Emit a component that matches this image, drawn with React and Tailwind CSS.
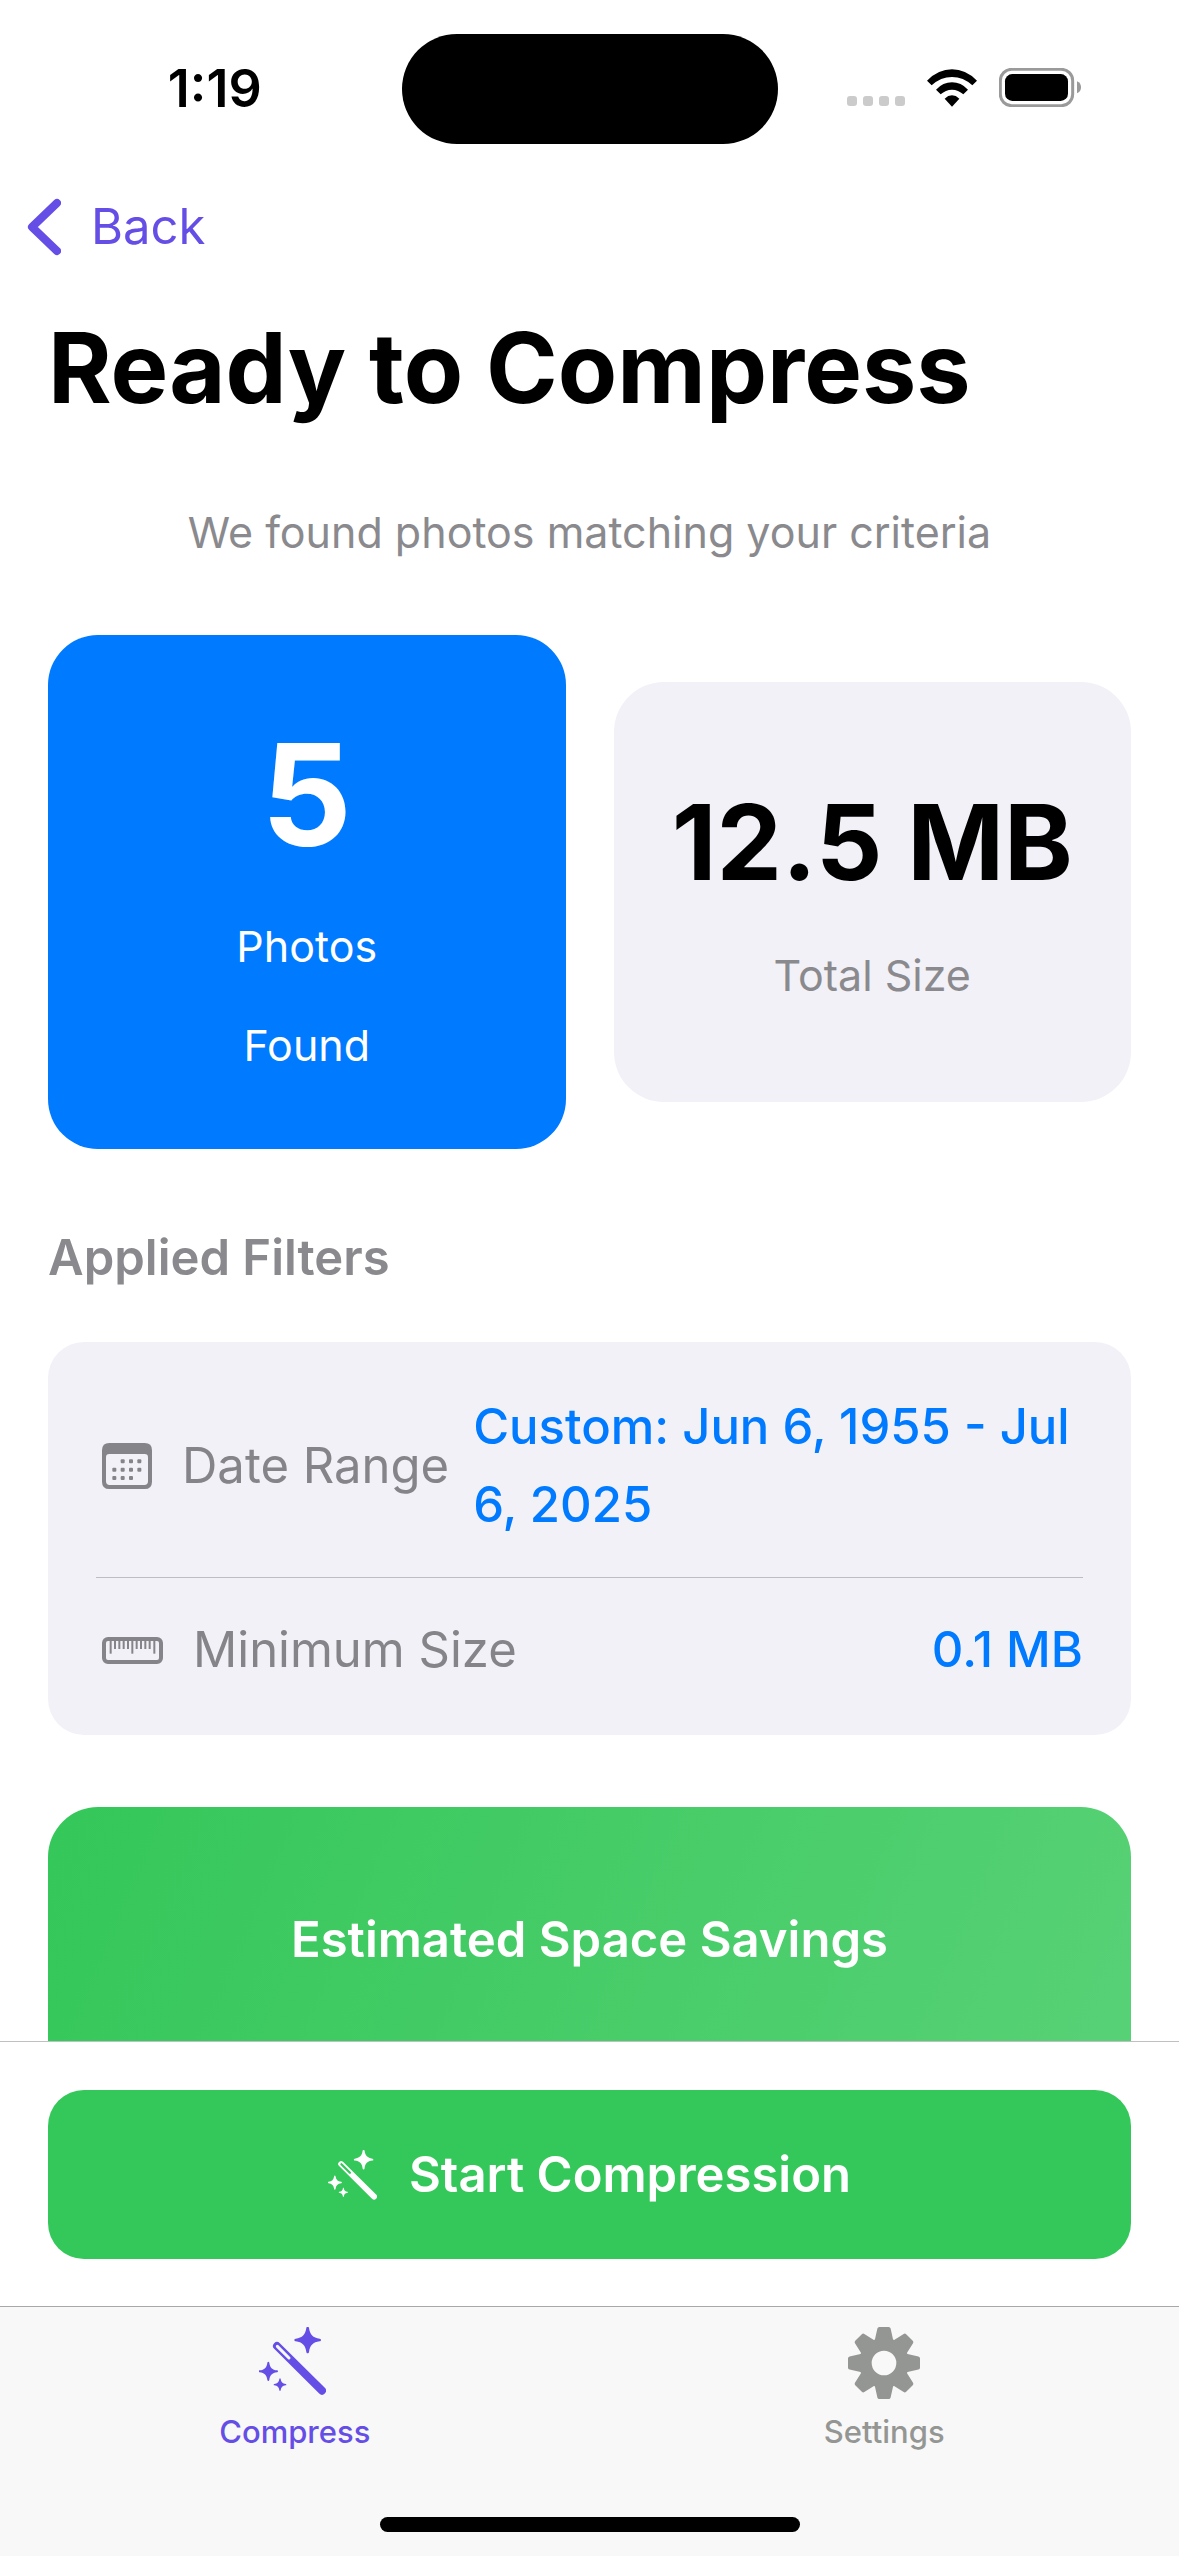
const GEAR_ANGLES = [0, 45, 90, 135, 180, 225, 270, 315];

function Star({ x, y, r }) {
  return (
    <path
      transform={`translate(${x} ${y}) scale(${r})`}
      d="M0-1C.05-1 .09-.97 .1-.9C.17-.4 .4-.17 .9-.1C.97-.09 1-.05 1 0C1 .05 .97 .09 .9 .1C.4 .17 .17 .4 .1 .9C.09 .97 .05 1 0 1C-.05 1-.09 .97-.1 .9C-.17 .4-.4 .17-.9 .1C-.97 .09-1 .05-1 0C-1-.05-.97-.09-.9-.1C-.4-.17-.17-.4-.1-.9C-.09-.97-.05-1 0-1Z"
    />
  );
}

function WandIcon({ className, hollow }) {
  return (
    <svg viewBox="0 0 201 204" className={className} fill="currentColor" aria-hidden="true">
      <Star x={146} y={39} r={40} />
      <Star x={28} y={133} r={29} />
      <Star x={63} y={173} r={19} />
      <path d="M54 57L189 191" stroke="currentColor" strokeWidth="24" strokeLinecap="round" />
      <path d="M55 58L90 93" className={hollow} strokeWidth="9" strokeLinecap="round" />
    </svg>
  );
}

function GearIcon({ className }) {
  return (
    <svg viewBox="-108 -108 216 216" className={className} fill="none" aria-hidden="true">
      <circle r="56" stroke="currentColor" strokeWidth="38" />
      {GEAR_ANGLES.map((angle) => (
        <path
          key={angle}
          transform={`rotate(${angle})`}
          d="M-14-102H14L22-66H-22Z"
          fill="currentColor"
          stroke="currentColor"
          strokeWidth="12"
          strokeLinejoin="round"
        />
      ))}
    </svg>
  );
}

function CalendarIcon({ className }) {
  const dots = [
    [62, 55], [87, 55], [112, 55],
    [37, 80], [62, 80], [87, 80], [112, 80],
    [37, 105], [62, 105], [87, 105],
  ];
  return (
    <svg viewBox="0 0 150 138" className={className} fill="currentColor" aria-hidden="true">
      <path
        fillRule="evenodd"
        d="M22 0H128Q150 0 150 22V116Q150 138 128 138H22Q0 138 0 116V22Q0 0 22 0ZM22 33Q12 33 12 43V115Q12 126 23 126H127Q138 126 138 115V43Q138 33 128 33Z"
      />
      {dots.map(([x, y]) => (
        <rect key={`${x}-${y}`} x={x - 6} y={y - 6} width="12" height="12" rx="3" />
      ))}
    </svg>
  );
}

function RulerIcon({ className }) {
  const ticks = [26, 39, 52, 65, 78, 91, 104, 117, 130, 143, 157];
  return (
    <svg viewBox="0 0 183 81" className={className} fill="none" stroke="currentColor" aria-hidden="true">
      <rect x="6" y="6" width="171" height="69" rx="12" strokeWidth="12" />
      {ticks.map((x, i) => (
        <path key={x} d={i % 5 === 0 ? `M${x} 10V50` : `M${x} 10V36`} strokeWidth="6" />
      ))}
    </svg>
  );
}

function StatusBar() {
  return (
    <div className="grid h-[178px] shrink-0 grid-cols-[1fr_376px_1fr] items-center">
      <time className="pl-7 text-center text-[52px] leading-[60px] font-semibold">1:19</time>
      <div className="h-[110px] rounded-full bg-black" />
      <div className="flex items-end justify-end pr-[98px] pb-1">
        <div className="mr-[22px] flex gap-1.5 pb-px">
          <span className="size-2.5 rounded-[3px] bg-[#cbcbcb]" />
          <span className="size-2.5 rounded-[3px] bg-[#cbcbcb]" />
          <span className="size-2.5 rounded-[3px] bg-[#cbcbcb]" />
          <span className="size-2.5 rounded-[3px] bg-[#cbcbcb]" />
        </div>
        <svg viewBox="0 0 150 112" className="mr-[22px] h-[38px] w-[50px]" aria-label="Wi-Fi">
          <path d="M0 34Q34 0 75 0T150 34L136 48Q109 23 75 23T14 48Z" />
          <path d="M27 61Q48 39 75 39T123 61L109 75Q94 61 75 61T41 75Z" />
          <path d="M53 88Q63 78 75 78T97 88L75 112Z" />
        </svg>
        <svg viewBox="0 0 246 117" className="h-[39px] w-[82px]" aria-label="Battery">
          <rect x="4" y="4" width="217" height="109" rx="34" fill="none" stroke="#9a9a9a" strokeWidth="9" />
          <rect x="18" y="18" width="189" height="81" rx="22" />
          <path d="M234 40Q246 45 246 58T234 76Z" fill="#9a9a9a" />
        </svg>
      </div>
    </div>
  );
}

export default function App() {
  return (
    <div className="flex h-screen flex-col overflow-hidden bg-white font-['Inter',sans-serif] text-black">
      <StatusBar />

      <header className="shrink-0">
        <button type="button" className="flex h-[98px] items-center gap-[30px] pl-[27px] text-[49px] text-[#654ee6]">
          <svg viewBox="0 0 34 58" className="h-[58px] w-[34px]" fill="none" aria-hidden="true">
            <path d="M30 5L5 29L30 53" stroke="currentColor" strokeWidth="8" strokeLinecap="round" strokeLinejoin="round" />
          </svg>
          Back
        </button>
      </header>

      <main className="min-h-0 flex-1 overflow-y-auto px-12 pt-8 [scrollbar-width:none]">
        <h1 className="text-[97px] leading-[120px] font-bold">Ready to Compress</h1>
        <p className="mt-[74px] text-center text-[43px] leading-[60px] text-[#8a8a8e]">
          We found photos matching your criteria
        </p>

        <section className="mt-[73px] grid grid-cols-2 items-center gap-12 text-center text-[43px] leading-[99px]">
          <div className="rounded-[50px] bg-[#007aff] pt-16 pb-[54px] text-white">
            <p className="text-[142px] leading-[190px] font-bold">5</p>
            <p className="mt-2">
              <span className="block">Photos</span>
              <span className="block">Found</span>
            </p>
          </div>
          <div className="rounded-[50px] bg-[#f2f1f7] pt-20 pb-[77px]">
            <p className="text-[104px] leading-[160px] font-bold whitespace-nowrap">12.5 MB</p>
            <p className="mt-1 text-[#8a8a8e]">Total Size</p>
          </div>
        </section>

        <h2 className="mt-[77px] text-[49px] leading-[64px] font-semibold text-[#8a8a8e]">Applied Filters</h2>

        <dl className="mt-[52px] rounded-[36px] bg-[#f2f1f7] px-12 py-[46px] text-[49px] leading-[78px]">
          <div className="flex items-center border-b border-[#bdbdc2] pb-[33px]">
            <dt className="flex shrink-0 items-center pl-1.5 text-[#858489]">
              <CalendarIcon className="mr-[30px] h-[46px] w-[50px]" />
              Date Range
            </dt>
            <dd className="ml-6 font-medium text-[#007aff]">Custom: Jun 6, 1955 - Jul 6, 2025</dd>
          </div>
          <div className="flex items-center justify-between pt-[33px]">
            <dt className="flex items-center pl-1.5 text-[#858489]">
              <RulerIcon className="mr-[30px] h-[27px] w-[61px]" />
              Minimum Size
            </dt>
            <dd className="font-medium text-[#007aff]">0.1 MB</dd>
          </div>
        </dl>

        <section className="mt-[72px] rounded-[50px] bg-linear-[113deg] from-[#34c759] to-[#5ad278] pt-[100px] pb-72 text-center text-white">
          <h2 className="text-[49px] leading-[66px] font-semibold">Estimated Space Savings</h2>
        </section>
      </main>

      <div className="shrink-0 border-t border-[#c0c0c2] px-12 pt-12 pb-[47px]">
        <button
          type="button"
          className="flex h-[169px] w-full items-center justify-center gap-8 rounded-[36px] bg-[#34c759] text-[49px] font-semibold text-white"
        >
          <WandIcon className="h-[50px] w-[49px]" hollow="stroke-[#34c759]" />
          Start Compression
        </button>
      </div>

      <nav className="shrink-0 border-t border-[#a8a8a8] bg-[#f8f8f8] pt-5 pb-6">
        <div className="grid grid-cols-2 text-[31px] leading-9 font-medium">
          <button type="button" className="flex flex-col items-center gap-[15px] text-[#654ee6]">
            <span className="flex h-[72px] items-start pr-1">
              <WandIcon className="h-[68px] w-[67px]" hollow="stroke-[#f8f8f8]" />
            </span>
            Compress
          </button>
          <button type="button" className="flex flex-col items-center gap-[15px] text-[#949693]">
            <GearIcon className="size-[72px]" />
            Settings
          </button>
        </div>
        <div className="mx-auto mt-[67px] h-[15px] w-[420px] rounded-full bg-black" />
      </nav>
    </div>
  );
}
